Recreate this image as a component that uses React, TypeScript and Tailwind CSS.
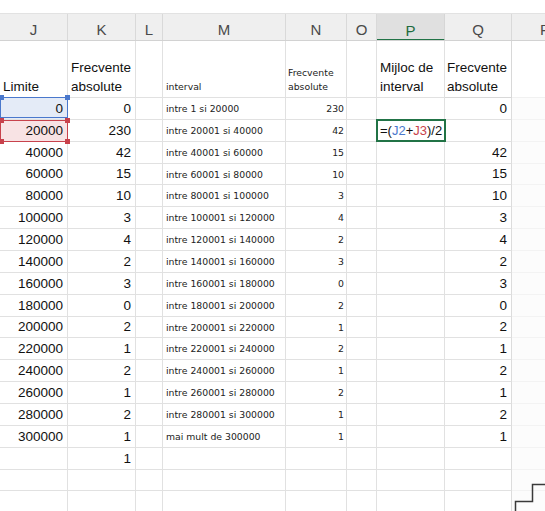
import React from "react";

const W = {
  J: "w-[68px]",
  K: "w-[68px]",
  L: "w-[27px]",
  M: "w-[123px]",
  N: "w-[61px]",
  O: "w-[30px]",
  P: "w-[68px]",
  Q: "w-[67px]",
  R: "w-[68px]",
};

const LETTERS = ["J", "K", "L", "M", "N", "O", "P", "Q", "R"] as const;

const J_VALS = Array.from({ length: 16 }, (_, i) => String(i * 20000));
const K_VALS = ["0", "230", "42", "15", "10", "3", "4", "2", "3", "0", "2", "1", "2", "1", "2", "1", "1"];
const M_VALS = Array.from({ length: 16 }, (_, i) => {
  if (i === 0) return "intre 1 si 20000";
  if (i === 15) return "mai mult de 300000";
  return `intre ${i * 20000 + 1} si ${(i + 1) * 20000}`;
});
const N_VALS = ["230", "42", "15", "10", "3", "4", "2", "3", "0", "2", "1", "2", "1", "2", "1", "1"];
const Q_VALS = ["0", "", "42", "15", "10", "3", "4", "2", "3", "0", "2", "1", "2", "1", "2", "1"];

const main = "font-['Liberation_Sans',Arial,sans-serif] text-[13.5px] text-[#111]";
const small = "font-['DejaVu_Sans',Verdana,sans-serif] text-[9.3px] text-[#222]";

function Corner({ pos, color }: { pos: string; color: string }) {
  return <div className={`absolute w-[5px] h-[5px] ${pos} ${color}`} />;
}

export default function App() {
  const rows = Array.from({ length: 20 }, (_, i) => i);
  return (
    <div className="relative w-[545px] h-[511px] overflow-hidden bg-white">
      <div className="h-[13px] bg-white" />
      {/* column header */}
      <div className="flex h-[28px] border-t border-b border-t-[#e2e2e2] border-b-[#d2d2d2] bg-[#efefef] font-['Liberation_Sans',Arial,sans-serif] text-[15px] leading-[15px] text-[#4a4a4a] overflow-hidden">
        {LETTERS.map((l) =>
          l === "P" ? (
            <div
              key={l}
              className={`${W[l]} shrink-0 flex items-end justify-center pb-[1px] bg-[#e0e0e0] border-r border-r-[#d6d6d6] border-b-2 border-b-[#217346] text-[#1d6b3e] -mb-px`}
            >
              {l}
            </div>
          ) : (
            <div key={l} className={`${W[l]} shrink-0 flex items-end justify-center pb-[3px] border-r border-r-[#d9d9d9]`}>
              {l}
            </div>
          )
        )}
      </div>

      {/* row 1: headers */}
      <div className="flex h-[57px]">
        <div className={`${W.J} shrink-0 border-r border-b border-[#e1e1e1] flex items-end pl-[3px] pb-[1px] ${main} leading-[19px]`}>Limite</div>
        <div className={`${W.K} shrink-0 border-r border-b border-[#e1e1e1] flex items-end pl-[3px] pb-[1px] ${main} leading-[19px]`}>
          <div>Frecvente<br />absolute</div>
        </div>
        <div className={`${W.L} shrink-0 border-r border-b border-[#e1e1e1]`} />
        <div className={`${W.M} shrink-0 border-r border-b border-[#e1e1e1] flex items-end pl-[3px] pb-[3px] ${small} leading-[14px]`}>interval</div>
        <div className={`${W.N} shrink-0 border-r border-b border-[#e1e1e1] flex items-end pl-[2px] pb-[3px] ${small} leading-[14px]`}>
          <div>Frecvente<br />absolute</div>
        </div>
        <div className={`${W.O} shrink-0 border-r border-b border-[#e1e1e1]`} />
        <div className={`${W.P} shrink-0 border-r border-b border-[#e1e1e1] flex items-end pl-[3px] pb-[1px] ${main} leading-[19px]`}>
          <div>Mijloc de<br />interval</div>
        </div>
        <div className={`${W.Q} shrink-0 border-r border-b border-[#d8d8d8] flex items-end pl-[2px] pb-[1px] ${main} leading-[19px]`}>
          <div>Frecvente<br />absolute</div>
        </div>
        <div className={`${W.R} shrink-0 border-r border-b border-[#f1f1f1]`} />
      </div>

      {/* data rows */}
      {rows.map((i) => (
        <div key={i} className="flex h-[21.86px]">
          <div
            className={`${W.J} shrink-0 relative border-r border-b border-[#e1e1e1] flex items-center justify-end pr-[4px] pt-[1px] ${main} ${
              i === 0 ? "bg-[#e4ebf7]" : i === 1 ? "bg-[#f8e3e4]" : ""
            }`}
          >
            {J_VALS[i] ?? ""}
            {i === 0 && (
              <div className="absolute left-0 top-[-1px] right-[-1px] bottom-[1px] border border-[#4a78cc] z-10">
                <Corner pos="-left-[2px] -top-[3px]" color="bg-[#4a78cc]" />
                <Corner pos="-right-[3px] -top-[3px]" color="bg-[#4a78cc]" />
              </div>
            )}
            {i === 1 && (
              <div className="absolute left-0 top-0 right-[-1px] bottom-[-1px] border border-[#c8424c] z-10">
                <Corner pos="-left-[2px] -top-[3px]" color="bg-[#c8424c]" />
                <Corner pos="-right-[3px] -top-[3px]" color="bg-[#c8424c]" />
                <Corner pos="-left-[2px] -bottom-[3px]" color="bg-[#c8424c]" />
                <Corner pos="-right-[3px] -bottom-[3px]" color="bg-[#c8424c]" />
              </div>
            )}
          </div>
          <div className={`${W.K} shrink-0 border-r border-b border-[#e1e1e1] flex items-center justify-end pr-[4px] pt-[1px] ${main}`}>
            {K_VALS[i] ?? ""}
          </div>
          <div className={`${W.L} shrink-0 border-r border-b border-[#e1e1e1]`} />
          <div className={`${W.M} shrink-0 border-r border-b border-[#e1e1e1] flex items-center pl-[3px] pt-[1px] whitespace-nowrap ${small}`}>
            {M_VALS[i] ?? ""}
          </div>
          <div className={`${W.N} shrink-0 border-r border-b border-[#e1e1e1] flex items-center justify-end pr-[2px] pt-[1px] ${small}`}>
            {N_VALS[i] ?? ""}
          </div>
          <div className={`${W.O} shrink-0 border-r border-b border-[#e1e1e1]`} />
          <div className={`${W.P} shrink-0 relative border-r border-b border-[#e1e1e1]`}>
            {i === 1 && (
              <div className={`absolute left-[-1px] top-[-1px] right-[-2px] bottom-[-1px] border-2 border-[#217346] z-20 bg-white flex items-center pl-[2px] pt-[1px] whitespace-nowrap font-['Liberation_Sans',Arial,sans-serif] text-[13px] text-[#111]`}>
                =(<span className="text-[#4a78cc]">J2</span>+<span className="text-[#c8424c]">J3</span>)/2
              </div>
            )}
          </div>
          <div className={`${W.Q} shrink-0 border-r border-b border-[#e1e1e1] border-r-[#dcdcdc] flex items-center justify-end pr-[4px] pt-[1px] ${main}`}>
            {Q_VALS[i] ?? ""}
          </div>
          <div className={`${W.R} shrink-0 border-r border-b border-[#f3f3f3] bg-[#fcfcfc]`} />
        </div>
      ))}

      <svg className="absolute left-[512px] top-[480px]" width="33" height="31" viewBox="0 0 33 31">
        <path d="M33 4.5 H20.5 V21.5 H3.5 V31" fill="none" stroke="#3a3a3a" strokeWidth="1.5" />
      </svg>
    </div>
  );
}
